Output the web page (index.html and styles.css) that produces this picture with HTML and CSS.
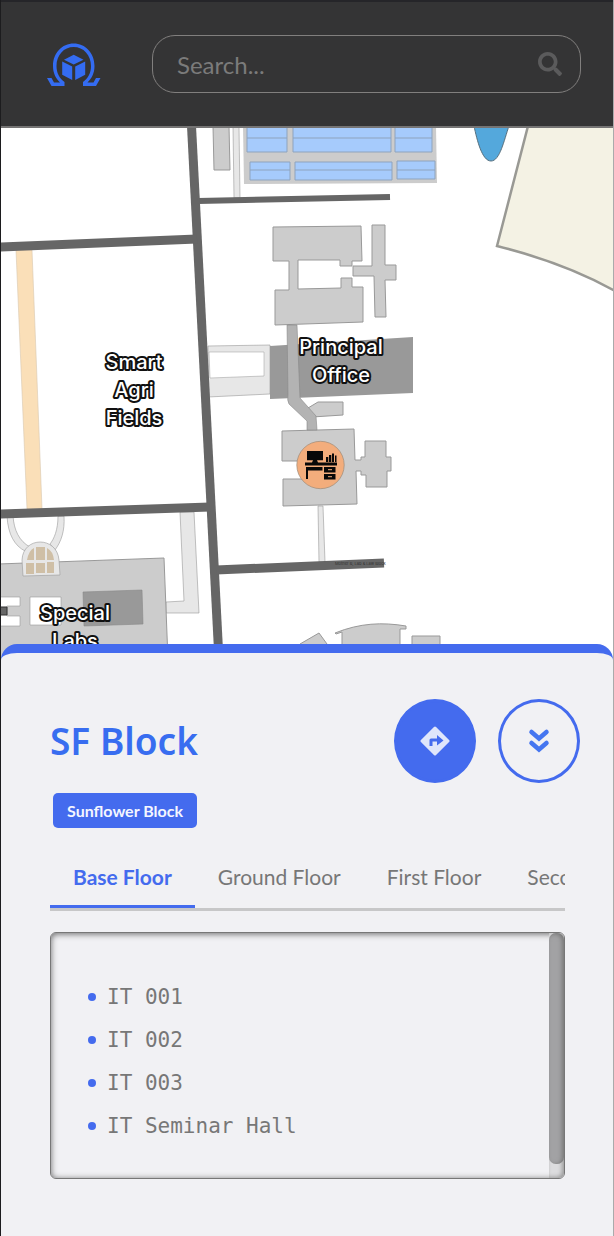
FILE: index.html
```html
<!DOCTYPE html>
<html lang="en">
<head>
<meta charset="utf-8">
<meta name="viewport" content="width=device-width, initial-scale=1">
<title>Campus Map</title>
<link rel="stylesheet" href="styles.css">
</head>
<body>
<div class="app">
  <header class="topbar">
    <a class="logo" href="#" aria-label="Home">
      <svg width="54" height="46" viewBox="47 42 54 46">
        <path d="M47 78H51.500L54 82.500H60C55.500 78 53 73 53 66C53 53 62 43.500 73.700 43.500S94.500 53 94.500 66C94.500 73 92 78 87.500 82.500H93.500L96 78H100.500L96 86H83V82C88 78.500 91 73 91 66C91 55 83.500 47 73.700 47S56.500 55 56.500 66C56.500 73 59.500 78.500 64.500 82V86H51.500Z" fill="#346cf2"/>
        <path d="M73.700 54.800L83.500 59.700L73.700 64.500L64 59.700ZM62.200 61.500L72.200 66.500V80L62.200 74.700ZM85.200 61.500L75.200 66.500V80L85.200 74.700Z" fill="#346cf2"/>
      </svg>
    </a>
    <form class="search" role="search">
      <input class="search-input" type="search" placeholder="Search..." aria-label="Search">
      <button class="search-button" type="button" aria-label="Submit search">
        <svg width="24" height="24" viewBox="0 0 512 512"><path fill="#5b5b5c" d="M505 442.700L405.300 343c-4.500-4.500-10.600-7-17-7H372c27.600-35.300 44-79.700 44-128C416 93.100 322.900 0 208 0S0 93.100 0 208s93.100 208 208 208c48.300 0 92.700-16.400 128-44v16.300c0 6.400 2.500 12.500 7 17l99.700 99.700c9.400 9.400 24.600 9.400 33.900 0l28.300-28.300c9.400-9.400 9.400-24.600.1-34zM208 336c-70.700 0-128-57.200-128-128 0-70.700 57.200-128 128-128 70.700 0 128 57.200 128 128 0 70.700-57.200 128-128 128z"/></svg>
      </button>
    </form>
  </header>

  <main class="map">
    <svg class="map-canvas" viewBox="1 128 612 532" preserveAspectRatio="xMinYMin slice" role="img" aria-label="Campus map">
      <!-- grounds -->
      <path d="M528 126L497 246C541 257 581 272 615 291V126Z" fill="#f4f2e4" stroke="#999994" stroke-width="2.500"/>
      <path d="M474 126C477 140 482 161 491 161S504 140 509 126Z" fill="#54a8dc" stroke="#58707e"/>
      <path d="M16 250H32L42 509H27Z" fill="#fadfb8" stroke="#d8c8b0" stroke-width=".6"/>
      <!-- footpaths -->
      <path d="M233 126H239L240 198H234Z" class="path"/>
      <path d="M180 512H194L199 613H166V602L184 601Z" class="path"/>
      <path d="M208 346L270 345V394L208 397Z" class="path"/>
      <path d="M209 352H264V376L210 378Z" fill="#fff" stroke="#999" stroke-width=".5"/>
      <path d="M318 506H323L325 562H319Z" class="path"/>
      <path d="M7 516C8 535 15 546 25 551L30 547C19 541 14 530 13 516ZM58 516C58 530 54 539 50 544L55 550C61 542 65 531 64 516Z" class="path"/>
      <!-- solar field -->
      <path d="M243 126H436L437 183L244 184Z" fill="#ccc"/>
      <g class="panel">
        <path d="M247 126H287V152H247ZM293 126H391V152H293ZM395 126H432V152H395ZM250 162H290V180H250ZM295 162H392V180H295ZM397 161H435V179H397Z"/>
        <path d="M247 138H287M293 138H391M395 138H432M250 170H290M295 170H392M397 170H435"/>
      </g>
      <!-- buildings -->
      <g class="building">
        <path d="M213 126H229L230 170H214Z"/>
        <path d="M273 227L361 226L362 261H352V266H340V260H298V289L341 288V278H352V287H363V322L275 325V290H289V261H273Z"/>
        <path d="M372 225H385V265H396V280H385L386 317H375L374 276H353V266H372Z"/>
        <path d="M303 411L318 402H343V415L312 417Z"/>
        <path d="M282 431L354 429L355 460H361V457H365V441H386V457H391V471H387V487H366V475H361V471H356L357 504L283 506V479H304V461H282Z"/>
        <path d="M-2 564L164 558L168 660H-2Z"/>
        <path d="M300 644L319 633L327 644V660H300Z"/>
        <path d="M335 633C360 623 382 622 406 626V629H400V660H342V632L336 634Z"/>
        <path d="M412 636H440V660H412Z"/>
      </g>
      <path d="M270 346L413 337V393L270 399Z" fill="#999"/>
      <path d="M287 325H297L300 398L316 416L317 430H307V421L289 404Q287 401 288 394Z" fill="#b3b3b3" stroke="#888" stroke-width=".6"/>
      <path d="M83 592L142 590L143 624L84 626Z" fill="#999" stroke="#888" stroke-width=".6"/>
      <path d="M30 597H61V625H30ZM0 597H20V606H7V616H20V626H0Z" fill="#fff" stroke="#999" stroke-width=".6"/>
      <path d="M0 607H7V615H0Z" fill="#666" stroke="#333"/>
      <path d="M23 576L22 560C23 536 57 536 59 560L60 575Z" fill="#e7e7e7" stroke="#999" stroke-width=".6"/>
      <path d="M27 560Q29 550 34 548V560ZM36 547H45V560H36ZM47 548Q53 551 54 560H47ZM26 563H34V574H26ZM36 563H45V573H36ZM47 562H54V573H47Z" fill="#cfbfa6"/>
      <!-- roads -->
      <path d="M191.500 126L219 660" class="road"/>
      <path d="M0 247L197 239M0 514L210 507M216 570L384 563" class="road"/>
      <path d="M198 201L390 197" class="road road-minor"/>
      <text x="335" y="565" class="map-note">Mother B, Lab &amp; Law Block</text>
      <!-- office marker -->
      <circle cx="320.500" cy="465" r="23.700" fill="#f3ad7c" stroke="#9d8b78" stroke-width=".7"/>
      <path d="M307 451H323V460.300H317L318 462.500H337V465.500H305V462.500H312L313 460.300H307ZM326 457H328.300V462H326ZM329 455H331.300V462H329ZM332 453.500H334V462H332ZM335 455.500H336.500V462H335ZM306 467H322.500V470.500H308V479H306ZM324 467H335.500V472.500H324ZM324 474H335.500V479.500H324Z" fill="#080808"/>
      <path d="M328 469.700H332M328 476.700H332" stroke="#f3ad7c"/>
      <!-- place names -->
      <g class="place">
        <text x="341" y="354">Principal</text><text x="341" y="382">Office</text>
        <text x="134" y="369">Smart</text><text x="134" y="397">Agri</text><text x="134" y="425">Fields</text>
        <text x="75" y="620">Special</text><text x="75" y="648">Labs</text>
      </g>
    </svg>
  </main>

  <section class="sheet" aria-labelledby="block-title">
    <div class="sheet-head">
      <h1 class="title" id="block-title">SF Block</h1>
      <div class="actions">
        <button class="round round-solid" type="button" aria-label="Directions">
          <svg width="30" height="30" viewBox="0 0 30 30"><path d="M15 2L28 15L15 28L2 15Z" fill="#dfe6fb" stroke="#dfe6fb" stroke-width="3" stroke-linejoin="round"/><path d="M9.500 20V14Q9.500 12.500 11 12.500H17V9L23.500 14.500L17 19.500V15.500H12.500V20Z" fill="#446bee"/></svg>
        </button>
        <button class="round" type="button" aria-label="Collapse">
          <svg width="24" height="26" viewBox="0 0 24 26"><path d="M4.500 4L12 10.500L19.500 4M4.500 15L12 21.500L19.500 15" fill="none" stroke="#4576f0" stroke-width="4.500" stroke-linecap="round" stroke-linejoin="miter"/></svg>
        </button>
      </div>
    </div>
    <span class="chip">Sunflower Block</span>
    <div class="tabs" role="tablist">
      <button class="tab tab-active" type="button" role="tab" aria-selected="true">Base Floor</button>
      <button class="tab" type="button" role="tab" aria-selected="false">Ground Floor</button>
      <button class="tab" type="button" role="tab" aria-selected="false">First Floor</button>
      <button class="tab" type="button" role="tab" aria-selected="false">Second Floor</button>
    </div>
    <div class="rooms" role="tabpanel">
      <ul class="room-list">
        <li>IT 001</li>
        <li>IT 002</li>
        <li>IT 003</li>
        <li>IT Seminar Hall</li>
      </ul>
      <div class="scroll-track"><div class="scroll-thumb"></div></div>
    </div>
  </section>
</div>
</body>
</html>
```
FILE: styles.css
```css
* { box-sizing: border-box; }

body {
  margin: 0;
  background: #fff;
  font-family: Lato, sans-serif;
}

button { font: inherit; cursor: pointer; }

.app {
  display: flex;
  flex-direction: column;
  min-height: 100vh;
  border-left: 1px solid #1c1c1e;
  border-right: 1px solid #aaaaab;
}

.topbar {
  display: flex;
  align-items: center;
  gap: 51px;
  padding: 33px 32px 33px 46px;
  background: #343435;
  border-top: 2px solid #252529;
  border-bottom: 2px solid #757474;
}

.logo { display: flex; padding-top: 2px; }

.search {
  display: flex;
  flex: 1;
  align-items: center;
  height: 58px;
  padding: 0 18px 0 24px;
  border: 1px solid #817f7e;
  border-radius: 23px;
}

.search-input {
  flex: 1;
  min-width: 0;
  padding: 2px 0 0;
  border: 0;
  outline: 0;
  background: transparent;
  color: #ddd;
  font: 24px/30px Lato, sans-serif;
}

.search-input::placeholder { color: #7b7b7b; opacity: 1; }

.search-button {
  display: flex;
  padding: 0;
  border: 0;
  background: transparent;
}

.map {
  flex: 1 1 532px;
  min-height: 0;
  overflow: hidden;
}

.map-canvas { display: block; width: 100%; height: 100%; }

.path { fill: #e7e7e7; stroke: #999; stroke-width: .6; }
.panel { fill: #a6cbfc; stroke: #8ea3bd; stroke-width: 1; }
.building { fill: #ccc; stroke: #999; stroke-width: 1; }
.road { fill: none; stroke: #666; stroke-width: 9; }
.road-minor { stroke-width: 6; }
.map-note { fill: #333; font: 4px Inter, sans-serif; }

.place {
  fill: #fff;
  stroke: #111;
  stroke-width: 4px;
  stroke-linejoin: round;
  paint-order: stroke;
  font: 500 20px Inter, sans-serif;
  text-anchor: middle;
}

.sheet {
  position: relative;
  margin-top: -16px;
  padding: 46px 48px 57px 49px;
  border-top: 9px solid #446bee;
  border-radius: 16px 16px 0 0;
  background: #f1f1f4;
}

.sheet-head {
  display: flex;
  align-items: center;
  justify-content: space-between;
  margin-right: -15px;
}

.title {
  margin: 0;
  color: #386df0;
  font: 600 37px/48px "Noto Sans", sans-serif;
}

.actions { display: flex; gap: 22px; }

.round {
  display: flex;
  align-items: center;
  justify-content: center;
  width: 82px;
  height: 84px;
  padding: 0;
  border: 3px solid #446bee;
  border-radius: 50%;
  background: transparent;
}

.round-solid { background: #446bee; }

.chip {
  display: block;
  width: fit-content;
  margin: 10px 0 0 3px;
  padding: 0 14px;
  border-radius: 5px;
  background: #446bee;
  color: #f4f6ff;
  font-size: 16px;
  font-weight: 700;
  line-height: 35px;
}

.tabs {
  display: flex;
  margin-top: 18px;
  overflow: hidden;
  border-bottom: 3px solid #c7c7c8;
}

.tab {
  flex: none;
  padding: 16px 23px 14px;
  border: 0;
  border-bottom: 3px solid transparent;
  background: transparent;
  color: #777;
  font-size: 21px;
  line-height: 29px;
}

.tab-active {
  border-bottom-color: #446bee;
  color: #446bee;
  font-weight: 700;
}

.rooms {
  display: flex;
  justify-content: space-between;
  margin-top: 21px;
  border: 1px solid #777;
  border-radius: 6px;
  box-shadow: inset 0 1px 6px #666;
}

.room-list {
  margin: 0;
  padding: 43px 0 30px 56px;
  color: #777;
  font: 21px/43px "DejaVu Sans Mono", monospace;
  list-style: none;
}

.room-list li::before {
  content: "";
  float: left;
  width: 8px;
  height: 8px;
  margin: 17px 0 0 -19px;
  border-radius: 50%;
  background: #446bee;
}

.scroll-track {
  width: 15px;
  padding-bottom: 14px;
  border-radius: 0 5px 5px 0;
  background: #dcdcde;
  box-shadow: inset -2px -1px 4px #999;
}

.scroll-thumb {
  height: 100%;
  border-radius: 7px;
  background: #a2a2a4;
  box-shadow: inset -2px 1px 4px #777;
}
```
